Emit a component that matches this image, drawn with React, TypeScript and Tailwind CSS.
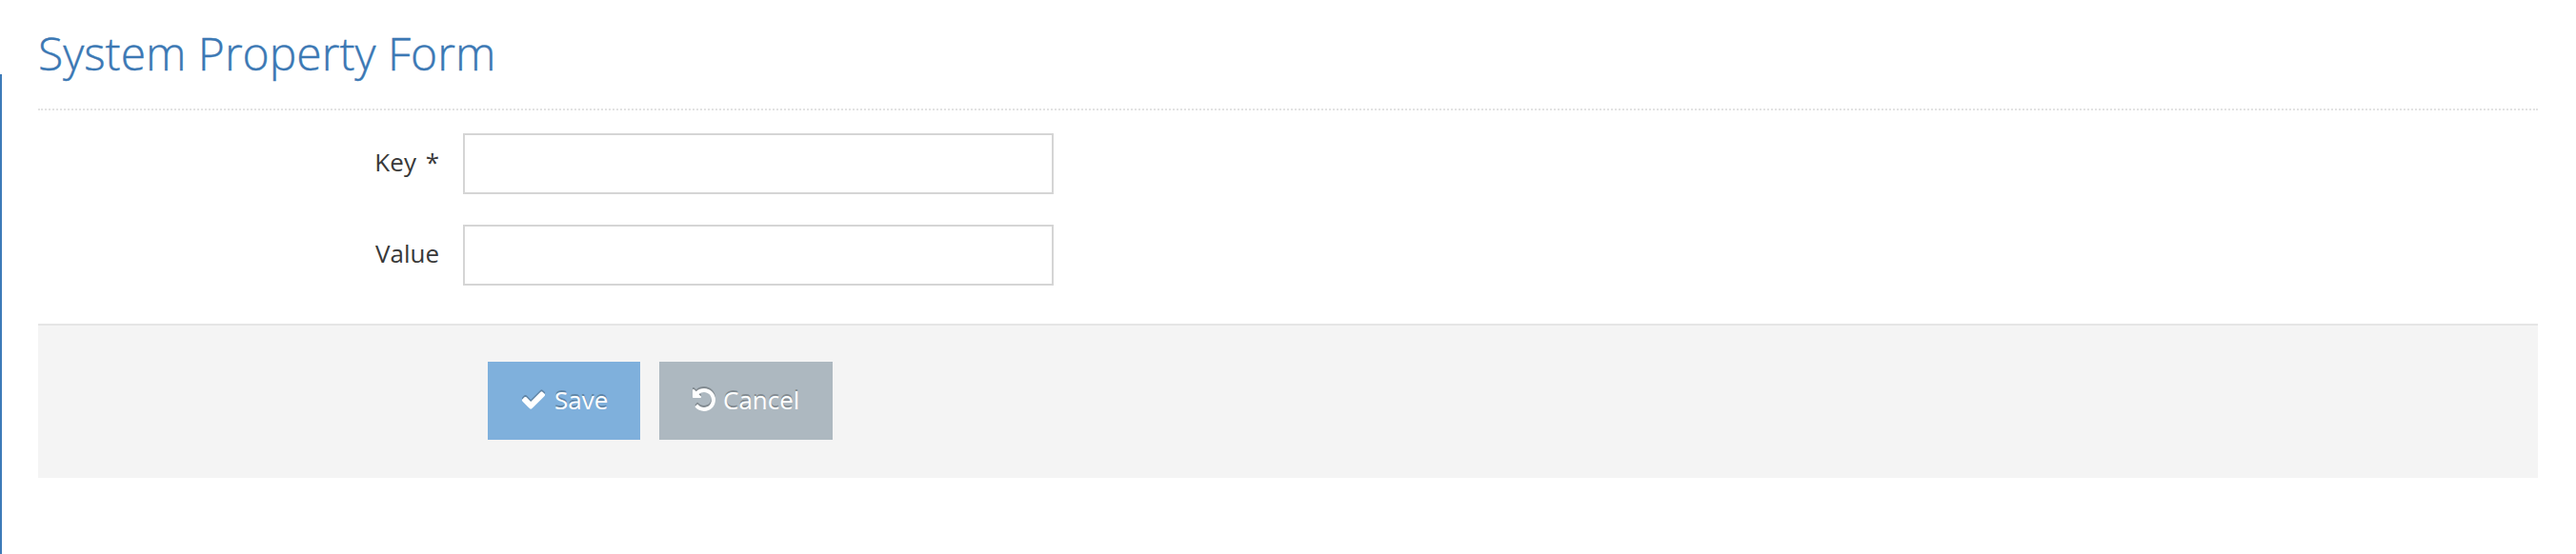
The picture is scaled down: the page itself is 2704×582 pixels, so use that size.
import type { ReactNode } from "react";

const CHECK =
  "M1671 566q0 40-28 68l-724 724-136 136q-28 28-68 28t-68-28l-136-136-362-362q-28-28-28-68t28-68l136-136q28-28 68-28t68 28l294 295 656-657q28-28 68-28t68 28l136 136q28 28 28 68z";
const UNDO =
  "M1664 896q0 156-61 298t-164 245-245 164-298 61q-172 0-327-72.5t-264-204.5q-7-10-6.5-22.5t8.5-20.5l137-138q10-9 25-9 16 2 23 12 73 95 179 147t225 52q104 0 198.5-40.5t163.5-109.5 109.5-163.5 40.5-198.5-40.5-198.5-109.5-163.5-163.5-109.5-198.5-40.5q-98 0-188 35.5t-160 101.5l137 138q31 30 14 69-17 40-59 40h-448q-26 0-45-19t-19-45v-448q0-42 40-59 39-17 69 14l130 129q107-101 244.5-156.5t284.5-55.5q156 0 298 61t245 164 164 245 61 298z";

function Icon({ path }: { path: string }) {
  return (
    <svg
      viewBox="0 0 1792 1792"
      fill="currentColor"
      className="size-7 shrink-0 drop-shadow-[0_-2px_0_rgba(0,0,0,0.25)]"
    >
      <path d={path} />
    </svg>
  );
}

function Field({ id, label }: { id: string; label: ReactNode }) {
  return (
    <div className="flex h-16">
      <label htmlFor={id} className="w-[421px] pt-2.5 text-right text-[26px] leading-10 text-[#393939]">
        {label}
      </label>
      <input
        id={id}
        type="text"
        className="ml-[25px] h-16 w-[620px] border-2 border-[#d5d5d5] bg-white px-3 text-[26px] outline-none"
      />
    </div>
  );
}

export default function App() {
  return (
    <div className="flex h-[582px] w-full bg-white font-['Open_Sans','Noto_Sans',sans-serif]">
      <div className="mt-[78px] w-0.5 bg-[#3d7ab8]" />
      <main className="ml-[38px] mr-10 flex-1">
        <header className="h-[116px] border-b-2 border-dotted border-[#e2e2e2] pt-[23px]">
          <h1 className="text-[48px] leading-[66px] font-light text-[#3b78b4] [-webkit-text-stroke:0.4px_#3b78b4]">
            System Property Form
          </h1>
        </header>
        <form className="pt-6">
          <div className="flex flex-col gap-8">
            <Field
              id="key"
              label={
                <>
                  Key <span className="ml-[3px]">*</span>
                </>
              }
            />
            <Field id="value" label="Value" />
          </div>
          <div className="mt-10 flex h-[162px] gap-5 border-t-2 border-[#e5e5e5] bg-[#f4f4f4] pt-[38px] pl-[472px] text-[26px] text-white">
            <button
              type="button"
              className="flex h-[82px] w-40 items-center gap-2 bg-[#7fb0dc] pb-0.5 pl-[34px] [text-shadow:0_-2px_0_rgba(0,0,0,0.25)]"
            >
              <Icon path={CHECK} />
              <span>Save</span>
            </button>
            <button
              type="button"
              className="flex h-[82px] w-[182px] items-center gap-1.5 bg-[#adb8c0] pb-0.5 pl-[33px] [text-shadow:0_-2px_0_rgba(0,0,0,0.25)]"
            >
              <Icon path={UNDO} />
              <span>Cancel</span>
            </button>
          </div>
        </form>
      </main>
    </div>
  );
}
